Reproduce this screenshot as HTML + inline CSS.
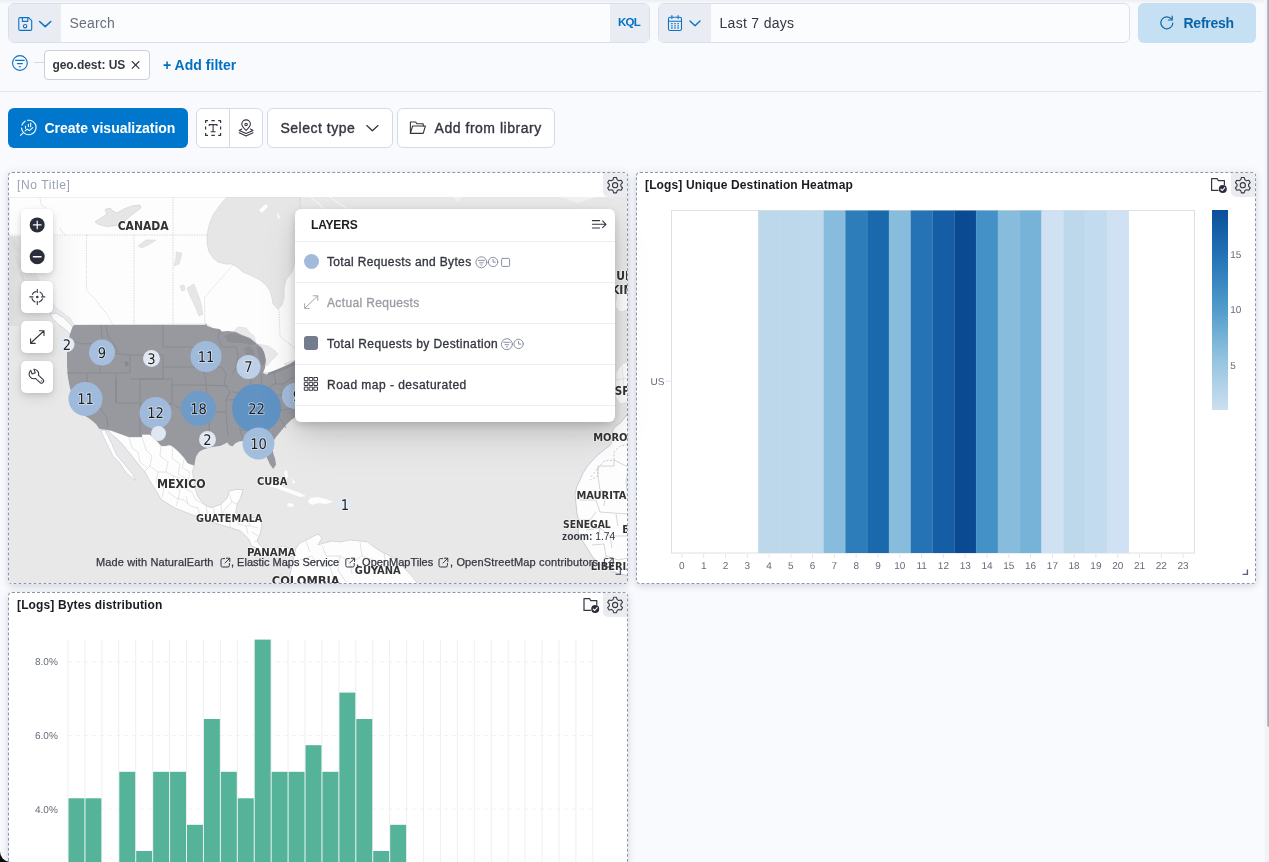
<!DOCTYPE html>
<html lang="en">
<head>
<meta charset="utf-8">
<title>Dashboard</title>
<style>
*{box-sizing:border-box;margin:0;padding:0}
html,body{width:1269px;height:862px;overflow:hidden}
body{background:#f8fafd;font-family:"Liberation Sans",Arial,sans-serif;color:#343741;position:relative}
.abs{position:absolute}
body>div{will-change:transform}
.topshade{left:0;top:0;width:1269px;height:4px;background:linear-gradient(#eceef2,#f8fafd)}
.rightedge{left:1263.5px;top:0;width:6px;height:862px;background:linear-gradient(90deg,#f8fafd,#f3f4f7 1px,#f2f3f5)}
.rightline{left:1266.8px;top:-4px;width:4px;height:731px;border-radius:2px;background:linear-gradient(90deg,#d0d3dc,#a7abb9 1px,#a2a6b5)}
/* query bar */
.field{border:1px solid #d9e0ec;border-radius:6px;background:#fbfcfd;overflow:hidden}
.prepend{background:#e9edf3;height:100%}
.placeholder{color:#69707d;font-size:14px;letter-spacing:.18px}
.kql{color:#0071c2;font-weight:700;font-size:11.5px;letter-spacing:-.8px}
.btn-refresh{background:#c6e0f3;border-radius:6px;color:#0a64a8;font-weight:700;font-size:14px;letter-spacing:-.26px}
.sep{left:0;top:91px;width:1262px;height:1px;background:#dfe5ef}
.badge{border:1px solid #c9cfdb;border-radius:4px;background:#fff;font-size:12px;font-weight:700;color:#343741;letter-spacing:-.04px}
.addfilter{color:#0071c2;font-weight:700;font-size:14px;letter-spacing:.03px}
/* toolbar */
.btn-primary{background:#0077cc;border-radius:6px;color:#fff;font-weight:700;font-size:14px;letter-spacing:-.03px}
.btn-plain{background:#fff;border:1px solid #d3dae6;border-radius:6px;color:#343741;font-size:14px;letter-spacing:.52px;-webkit-text-stroke:.36px}
/* panels */
.panel{background:#fff;border:1px dashed #8d97ab;border-radius:4px;box-shadow:0 1px 9px rgba(50,60,90,.13),0 3px 6px rgba(50,60,90,.07)}
.ptitle{font-size:12px;font-weight:700;color:#1a1c21;white-space:nowrap;letter-spacing:.14px}
.gearbg{background:#ebecf0;border-radius:0 3px 0 5px}
svg{position:absolute;left:0;top:0;overflow:visible}
svg{font-family:"Liberation Sans",Arial,sans-serif;text-rendering:geometricPrecision}
.ctl{background:#fff;border-radius:5px;box-shadow:0 2px 6px rgba(0,0,0,.13),0 6px 14px rgba(0,0,0,.07),0 0 2px rgba(0,0,0,.06)}
.layers{background:#fff;border-radius:6px;box-shadow:0 3px 9px rgba(0,0,0,.15),0 9px 24px rgba(0,0,0,.11),0 20px 40px rgba(0,0,0,.08)}
.lrow{left:0;width:320px;height:1px;background:#eceff5}
.ltxt{font-size:12px;color:#343741;white-space:nowrap;letter-spacing:.35px;-webkit-text-stroke:.32px}
.maplabel{font-family:"DejaVu Sans Condensed","DejaVu Sans","Liberation Sans",sans-serif;font-weight:700;color:#333;white-space:nowrap;text-shadow:0 0 2px #fff,0 0 2px #fff,0 0 1px #fff}
.attr{font-size:11px;color:#343741;white-space:nowrap;-webkit-text-stroke:.25px}
</style>
</head>
<body>
<div class="abs topshade"></div>

<!-- ======= query bar ======= -->
<div class="abs field" style="left:8px;top:3px;width:642px;height:40px">
  <div class="abs prepend" style="left:0;top:0;width:52px"></div>
  <div class="abs placeholder" style="left:60.5px;top:11px">Search</div>
  <div class="abs prepend" style="left:601px;top:0;width:41px"></div>
  <div class="abs kql" style="left:609px;top:12px">KQL</div>
</div>
<div class="abs field" style="left:658px;top:3px;width:472px;height:40px">
  <div class="abs prepend" style="left:0;top:0;width:52px"></div>
  <div class="abs" style="left:60.5px;top:11px;font-size:14px;letter-spacing:.3px;color:#343741">Last 7 days</div>
</div>
<div class="abs btn-refresh" style="left:1138px;top:3px;width:118px;height:40px">
  <div class="abs" style="left:45.5px;top:12px">Refresh</div>
</div>

<!-- filter row -->
<div class="abs" style="left:34px;top:62px;width:11px;height:1px;background:#d3dae6"></div>
<div class="abs badge" style="left:44px;top:50px;width:106px;height:30px">
  <div class="abs" style="left:7.4px;top:7px">geo.dest: US</div>
</div>
<div class="abs addfilter" style="left:163px;top:57px">+ Add filter</div>
<div class="abs sep"></div>

<!-- ======= toolbar ======= -->
<div class="abs btn-primary" style="left:8px;top:108px;width:180px;height:40px">
  <div class="abs" style="left:36.5px;top:11.5px">Create visualization</div>
</div>
<div class="abs btn-plain" style="left:196px;top:108px;width:67px;height:40px">
  <div class="abs" style="left:32px;top:0;width:1px;height:38px;background:#d3dae6"></div>
</div>
<div class="abs btn-plain" style="left:267px;top:108px;width:126px;height:40px">
  <div class="abs" style="left:12.4px;top:11px">Select type</div>
</div>
<div class="abs btn-plain" style="left:397px;top:108px;width:158px;height:40px">
  <div class="abs" style="left:36.6px;top:11px">Add from library</div>
</div>

<!-- ======= panels ======= -->
<div class="abs panel" style="left:8px;top:172px;width:620px;height:412px"></div>
<div class="abs panel" style="left:636px;top:172px;width:620px;height:412px"></div>
<div class="abs panel" style="left:8px;top:592px;width:620px;height:300px"></div>

<div class="abs ptitle" style="left:16.5px;top:178px;font-weight:400;color:#98a2b3;letter-spacing:.62px">[No Title]</div>
<div class="abs ptitle" style="left:645px;top:178px">[Logs] Unique Destination Heatmap</div>
<div class="abs ptitle" style="left:17px;top:598px">[Logs] Bytes distribution</div>

<div class="abs gearbg" style="left:603px;top:173px;width:24px;height:24px"></div>
<div class="abs gearbg" style="left:1231px;top:173px;width:24px;height:24px"></div>
<div class="abs gearbg" style="left:603px;top:593px;width:24px;height:24px"></div>

<!-- ======= map ======= -->
<div class="abs" id="map" style="left:9px;top:197px;width:618px;height:386px;overflow:hidden;background:#e8e8e8">
<svg width="619" height="386" viewBox="9 197 619 386" style="position:absolute;left:0;top:0">
  <defs>
    <linearGradient id="lfade" x1="0" x2="1" y1="0" y2="0"><stop offset="0" stop-color="#dcdcdc"/><stop offset=".25" stop-color="#e4e4e4" stop-opacity=".8"/><stop offset="1" stop-color="#f0f0f0" stop-opacity="0"/></linearGradient>
    <filter id="soft" x="-5%" y="-5%" width="110%" height="110%"><feGaussianBlur stdDeviation="0.6"/></filter>
  </defs>
  <rect x="9" y="197" width="619" height="386" fill="#e8e8e8"/>
  <!-- North America land -->
  <path fill="#fdfdfd" stroke="#cfd3da" stroke-width="0.6" d="M9,197 L300,197 L300,215 L300,365 L295,362 L285,368 L272,372 L263,373 L230,340 L206,324 L74,325
   L70,318 L62,312 L56,308 L50,298 L44,290 L40,282 L34,270 L28,255 L22,243 L9,236 Z"/>
  <!-- Mexico + Central America -->
  <path fill="#fdfdfd" stroke="#c3cad6" stroke-width="0.7" d="M99,428.5 L111,430.5 L129,437 L142,437 L142,434.5 L150,434.5 L156,440 L161,445.7 L165,446 L169.5,444.9 L172.8,446.5 L178,451 L184.4,458 L187.7,463 L194.3,465.5 L192.6,471.3 L193.5,480 L195,488 L197.6,496.2 L204.2,504.4 L210.8,507.7 L220.8,504.4 L227.4,497.8 L229,491.2 L235.7,489.5 L243.1,489.5 L240.6,497.8 L237.3,504.4 L235.7,512.7 L240,516 L248,517 L256,518 L262.1,522.6 L260.5,532.6 L257.2,540.8 L259,544 L262.1,547.5 L268,549 L274,549 L282,546 L288,548 L292,553 L296,548 L296,558 L290,556 L284,552 L276,554 L268,556 L258.8,549 L251.4,545.8 L248.9,539.2 L240.6,531 L230,527.5 L219,524.3 L205,519 L191,514.4 L174.4,507.7 L161.2,499.5 L156.2,491.2 L150,481 L144.6,471.3 L138,464 L133,457.3 L127,450 L121.5,443.2 L116,438 L111.5,434 L107.4,430 Z"/>
  <!-- Baja California -->
  <path fill="#fdfdfd" stroke="#c3cad6" stroke-width="0.6" d="M100.8,430.8 L105,430 L111.5,443.2 L116.5,454.8 L124.8,464.7 L133,474.6 L135.5,480.4 L126.4,473 L119.8,463 L113.2,456.4 L106.6,443.2 Z"/>
  <!-- Mexican state / central american borders (faint) -->
  <g fill="none" stroke="#d2d5db" stroke-width="0.6">
    <path d="M129,437 L132,448 L138,452 L140,462 L147,468 M142,437 L146,450 L152,456 L150,466 L158,472 L156,482 L164,488 L162,498 M161,446 L160,456 L168,462 L166,472 L174,476 L172,486 L180,490 L178,500 M172.800,447 L172,458 L180,464 L178,474 L186,478 L184,488 L192,492 M184.400,458 L182,468 L190,472 L188,482 L195,486 M158,472 L166,472 M164,488 L172,486 M150,466 L144,472 M174,476 L180,478 M168,492 L176,498 L184,500 L190,506 L198,508 M178,500 L176,506 M186,496 L188,504 M192,492 L196,500 L204,504 M198,508 L200,516 M206,506 L208,518 M214,506 L214,520 M220.800,504 L222,514 L230,518 L230,527 M229,493 L232,502 L237,504 M232,502 L226,508 L222,514 M240,516 L238,524 L246,526 L248,534 M248,517 L250,526 L258,528 M246,526 L250,526 M252,532 L258,536 M254,542 L258,540"/>
  </g>
  <!-- South America -->
  <path fill="#fdfdfd" stroke="#c5cbd6" stroke-width="0.7" d="M288,584 L292,566 L296,548 L300,543 L306,540 L312,537 L318,534 L322,538 L318,545 L324,543 L332,541 L340,542 L350,540 L360,541 L368,542 L374,547 L382,552 L390,556 L398,562 L405,569 L412,576 L418,584 Z"/>
  <g fill="none" stroke="#cdd1d9" stroke-width="0.6">
    <path d="M300,560 L312,556 L318,566 L330,566 L334,580 M322,545 L326,556 L340,556 L350,562 L352,574 M360,542 L362,556 L374,560 L378,574 M384,553 L386,566 L396,570 M306,541 L310,552 M340,556 L338,570 L346,582 M362,556 L352,562"/>
  </g>
  <!-- Caribbean islands -->
  <path fill="#fdfdfd" d="M268,483 L276,483 L284,487 L292,490 L300,493 L306,496 L300,497 L292,494 L284,491 L276,488 L268,486 Z"/>
  <path fill="#fdfdfd" d="M310,498 L318,497 L326,499 L333,502 L326,504 L318,503 L312,505 L308,502 Z"/>
  <path fill="#fdfdfd" d="M288,503 L294,504 L293,507 L287,506 Z"/>
  <path fill="#fdfdfd" d="M284,472 L287,470 L288,476 L286,480 Z M292,478 L295,482 L293,484 Z"/>
  <!-- Africa -->
  <path fill="#fdfdfd" stroke="#b9c4d4" stroke-width="0.8" d="M628,412 L626.2,416 L620.5,422.700 L616,426 L613,429.300 L612,436 L611,444.400 L604,450 L597.800,454.800 L592,461 L587.400,466.200 L583,473 L580.300,479.400 L577,486 L575,494 L576,504 L577,514 L580,524 L578,532 L582,540 L587,548 L592,556 L598,563 L606,568 L614,572 L622,574.500 L628,575.500 Z"/>
  <g fill="none" stroke="#b4b7bd" stroke-width="0.7" stroke-dasharray="2.2 1.6">
    <path d="M628,444 L620,446 L614,452 L614,460 L604,461 L598,468 L590,478 M598,468 L598,476 L590,480"/>
  </g>
  <g fill="none" stroke="#b9bcc2" stroke-width="0.6">
    <path d="M614,460 L614,466 L598,466 L598,476 M614,460 L628,467 M626,470 L628,470 L626,482 L628,500 M598,476 L600,490 L606,492 L628,494 M580,500 L596,500 L600,512 L628,514 M578,520 L590,520 L596,512 M586,530 L600,528 L610,536 L628,536 M592,545 L604,544 L606,556 L618,560 L628,558 M600,528 L598,540 M610,536 L612,548 M606,556 L600,566 M606,492 L604,506 M616,514 L618,526"/>
  </g>
  <!-- Europe bits on right strip -->
  <path fill="#fdfdfd" stroke="#d5d8df" stroke-width="0.5" d="M618,290 L628,286 L628,310 L620,312 L615,306 Z"/>
  <path fill="#fdfdfd" stroke="#d5d8df" stroke-width="0.5" d="M616,372 L622,364 L628,362 L628,402 L620,404 L615,396 Z"/>
  <g fill="none" stroke="#d5d8df" stroke-width="0.5"><path d="M616,380 L628,378 M622,364 L624,392 L616,394"/></g>
  <!-- top strip slivers -->
  <path fill="none" stroke="#f4f4f4" stroke-width="1.2" d="M311,197 L318,203 L324,209 M330,197 L340,204 L348,209"/>
  <path fill="#f1f1f1" d="M453,197 L462,197 L458,202 Z M560,197 L596,197 L578,203 Z"/>
  <!-- Hudson Bay -->
  <path fill="#e6e6e6" stroke="#d0d3da" stroke-width="0.6" d="M227,197 L220,205 L213,215 L209,225 L207,235 L207,244 L209,252 L213,258 L218,262 L226,264 L232,264 L238,268 L243,272 L252,276 L260,280 L266,285 L270,291 L272,298 L273,304 L278,309 L282,305 L284,298 L284,288 L286,280 L292,272 L295,262 L297,250 L296,238 L294,228 L296,218 L300,210 L300,197 Z"/>
  <path fill="#fdfdfd" d="M259,210 L266,204 L268,206.500 L262,213 Z M277,212 L280,217 L278,219 Z"/>
  <!-- Canadian lakes -->
  <path fill="#e6e6e6" stroke="#c5cfdc" stroke-width="0.6" d="M95,221.700 L101,218 L107,214 L105,209.500 L110,208 L113,211 L117,213 L124,209 L131.600,206 L140,205 L141,208 L135,212.500 L129,217 L125,221 L122,224 L114,226 L107,226.500 L97.500,224 Z"/>
  <path fill="#e6e6e6" stroke="#cfd4dc" stroke-width="0.5" d="M138,246 L146,240 L156,240 L150,244 L142,248 Z"/>
  <path fill="#e6e6e6" stroke="#cfd4dc" stroke-width="0.5" d="M176,252 L182,253 L179,264 L174,266 L176,258 Z"/>
  <path fill="#e6e6e6" stroke="#cfd4dc" stroke-width="0.5" d="M180,286 L184,285 L185,290 L182,291 Z M187,288 L194,284 L200,300 L203,314 L199,316 L194,304 L190,296 Z"/>
  <!-- Canada province borders -->
  <g fill="none" stroke="#c4c7ce" stroke-width="0.6" stroke-dasharray="1.5 1">
    <path d="M9,235 L207,235 M86.500,235 L86.500,290 L94,298 L102,308 L108,316 L113,325 M134,235 L134,325 M173,197 L173,325 M234,264 L218,282 L204.700,297 L204.700,323 M279,309 L280,336 L288,343 L296,349 M40,197 L41,205 L45,207 L48,212 M60,228 L62,232 L66,235"/>
  </g>
  <!-- Alaska panhandle / BC coast texture -->
  <path fill="#dedee0" filter="url(#soft)" d="M9,236 L16,238 L22,246 L26,258 L30,272 L40,284 L46,292 L36,292 L28,282 L22,270 L16,258 L9,252 Z"/>
  <g fill="#a4a6ae" filter="url(#soft)">
    <path d="M10,239 L15,240 L18,246 L20,252 L17,253 L13,247 Z M14,254 L18,256 L21,264 L22,270 L19,269 L16,262 Z M11,262 L14,266 L15,272 L12,270 Z M19,272 L23,274 L25,281 L22,280 Z M26,282 L32,282 L38,285 L44,288 L42,292 L34,291 L28,288 Z"/>
  </g>
  <g fill="#c9cace">
    <path d="M16,243 L19,247 L17,249 Z M20,258 L23,263 L21,265 Z M30,285 L36,287 L34,290 Z M12,256 L14,259 L12,261 Z"/>
  </g>
  <rect x="9" y="236" width="75" height="90" fill="url(#lfade)"/>
  <!-- Vancouver island -->
  <path fill="#fbfbfc" stroke="#b9c6d8" stroke-width="0.6" d="M50,314 L56,313 L64,318 L72,326 L74,332 L70,334 L66,330 L58,324 L52,318 Z"/>
  <!-- great lakes (north / light) -->
  <path fill="#e9e9ea" stroke="#cfd4dc" stroke-width="0.5" d="M232,333 L238,327 L246,328 L250,333 L254,336 L256,343 L246,338 L238,334 Z"/>
  <path fill="#e9e9ea" stroke="#cfd4dc" stroke-width="0.5" d="M258,344 L268,346 L274,350 L278,354 L274,358 L270,362 L267,366 L265,358 L263,350 Z"/>
  <path fill="#e9e9ea" stroke="#cfd4dc" stroke-width="0.5" d="M284,364 L292,361 L296,360 L296,364 L288,367 Z"/>
  <!-- USA -->
  <path fill="#98999f" d="M74,325 L205.5,325 L205.8,322.5 L207,326 L213,328 L219,329 L222,331.5 L228,331 L236,332 L242,335 L250,338 L256,343 L261,347 L264,352 L266,360 L265,368 L263,373 L266,374.5 L274,372 L282,368 L290,364 L296,360 L300,360 L300,414 L294,418 L291,420 L286,425 L281,431 L276,437 L273,442 L272,448 L273.7,454.8 L275.2,459 L276,464.7 L273.2,468.9 L270,464.500 L267,458 L265,452 L262,446 L256,442 L250,441 L244,440.7 L239,441.5 L235,443.5 L232.4,446.5 L229,445 L227.4,442.4 L220.8,445.7 L210.8,447.3 L202.6,449.8 L199,452 L196,456.4 L194.3,465.5 L190,464 L187.7,463 L184.4,458 L178,451 L172.8,446.5 L169.5,444.9 L165,446 L161,445.7 L156,440 L150,434.5 L142,434.5 L142,437 L129,437 L111,430.5 L99,428.5 L96,424 L90,419 L82,414 L78,408 L73,398 L70,388 L68,378 L67,366 L67,352 L68,342 L70,334 L72,328 Z"/>
  <!-- lakes inside US polygon (darker) -->
  <path fill="#8e8f96" d="M224,336 L232,333 L240,335 L250,339 L256,344 L250,345 L242,343 L236,343 L228,342 Z"/>
  <path fill="#8e8f96" d="M244,348 L250,346 L254,350 L255,358 L253,366 L249,366 L247,358 Z"/>
  <path fill="#8e8f96" d="M256,346 L262,348 L265,356 L265,364 L262,366 L259,358 Z"/>
  <path fill="#8e8f96" d="M268,373 L278,369 L290,364 L296,361 L296,364 L286,369 L276,373 L268,375 Z"/>
  <!-- state borders -->
  <g fill="none" stroke="#84858c" stroke-width="0.7">
    <path d="M70,341 L84,344 L100,343 M101,325 L102,338 L106,346 L104,353 L100,355 L100,373 M100,373 L67,373 M87,373 L87,390 L107,418 L108,428 M100,373 L116,373 L116,403 M116,373 L130,373 L130,355 L106,352 M130,355 L163,355 L163,379 L130,379 M116,403 L140,403 L140,436 M116,379 L116,403 M140,379 L140,403 M106,325 L108,336 L114,344 L118,352 M163,325 L163,347 M163,347 L196,347 M163,367 L200,367 M140,379 L172,379 L172,385 L206,385 M172,385 L172,404 L140,404 M172,404 L180,408 L196,412 L206,412 M196,347 L198,356 L202,367 L206,380 L206,385 L208,412 L210,436 L208,445 M206,412 L226,412 L228,436 M196,347 L218,347 L220,356 M200,367 L222,367 L226,374 L224,384 L230,392 L226,400 L226,412 M206,385 L228,386 M220,329 L218,338 L222,347 M222,347 L236,347 L238,356 L236,368 L232,374 M236,368 L250,368 M250,366 L251,390 L248,398 M261,374 L262,394 L258,400 M232,392 L262,394 M226,400 L270,398 L290,392 M240,400 L240,430 L244,442 M256,400 L258,430 L262,444 M258,430 L240,430 M258,434 L274,436 M270,398 L276,412 L286,428 M276,412 L292,408 M262,394 L274,384 L284,384 L292,378 L300,378 M274,372 L276,384"/>
  </g>
  <!-- rivers/lakes small -->
  <path fill="#878990" d="M124,362 L127,361 L129,365 L126,367 Z"/>
  <!-- cluster circles -->
  <g>
    <circle cx="67" cy="344.5" r="7.5" fill="#e3eaf4"/>
    <circle cx="102" cy="352.5" r="13" fill="#a6bfde"/>
    <circle cx="151.5" cy="358.5" r="8.5" fill="#dfe7f2"/>
    <circle cx="206" cy="356.5" r="15.5" fill="#9fbadb"/>
    <circle cx="248.5" cy="367" r="12" fill="#bdd0e7"/>
    <circle cx="85.5" cy="399" r="17" fill="#9fbadb"/>
    <circle cx="155.5" cy="413" r="16" fill="#9fbadb"/>
    <circle cx="158.5" cy="433.5" r="7.5" fill="#dfe7f2"/>
    <circle cx="198.5" cy="408.5" r="17.5" fill="#6f9bc9"/>
    <circle cx="256.5" cy="408.5" r="24.5" fill="#6092c4"/>
    <circle cx="295" cy="396" r="13" fill="#a6bfde"/>
    <circle cx="207.5" cy="439.5" r="8.5" fill="#dfe7f2"/>
    <circle cx="258.5" cy="443.5" r="16" fill="#a3bddc"/>
    <circle cx="345" cy="504.5" r="7" fill="#e3eaf4"/>
  </g>
  <g font-family="'DejaVu Sans Condensed','DejaVu Sans',sans-serif" font-size="14.6" fill="#1f1f1f" text-anchor="middle" stroke="#fff" stroke-width="1.6" stroke-opacity=".55" paint-order="stroke" style="paint-order:stroke">
    <text x="67" y="349.5">2</text>
    <text x="102" y="357.5">9</text>
    <text x="151.5" y="363.5">3</text>
    <text x="206" y="361.5">11</text>
    <text x="248.5" y="372">7</text>
    <text x="85.5" y="404">11</text>
    <text x="155.5" y="418">12</text>
    <text x="198.5" y="413.5">18</text>
    <text x="256.5" y="413.5">22</text>
    <text x="297" y="401">9</text>
    <text x="207.5" y="444.5">2</text>
    <text x="258.5" y="448.5">10</text>
    <text x="345" y="509.5">1</text>
  </g>
</svg>
<!-- labels -->
<div class="abs maplabel" style="left:108.7px;top:22px;font-size:12px">CANADA</div>
<div class="abs maplabel" style="left:148px;top:280px;font-size:12.3px">MEXICO</div>
<div class="abs maplabel" style="left:248px;top:278.4px;font-size:11px">CUBA</div>
<div class="abs maplabel" style="left:187px;top:315px;font-size:10.8px">GUATEMALA</div>
<div class="abs maplabel" style="left:238px;top:349.4px;font-size:11.3px">PANAMA</div>
<div class="abs maplabel" style="left:262.800px;top:375.6px;font-size:12.7px">COLOMBIA</div>
<div class="abs maplabel" style="left:345.8px;top:366.8px;font-size:11px">GUYANA</div>
<div class="abs maplabel" style="left:584.2px;top:233.700px;font-size:11px">MOROCCO</div>
<div class="abs maplabel" style="left:567.4px;top:292px;font-size:11px">MAURITANIA</div>
<div class="abs maplabel" style="left:554px;top:321.3px;font-size:10.3px">SENEGAL</div>
<div class="abs maplabel" style="left:613.2px;top:326.4px;font-size:11px">BURKINA</div>
<div class="abs maplabel" style="left:581.7px;top:363.2px;font-size:11px">LIBERIA</div>
<div class="abs maplabel" style="left:607.3px;top:71.800px;font-size:12px">UNITED</div>
<div class="abs maplabel" style="left:602px;top:86px;font-size:12px">KINGDOM</div>
<div class="abs maplabel" style="left:605.8px;top:187px;font-size:11.5px">SPAIN</div>

</div>

<!-- map controls -->
<div class="abs ctl" style="left:21px;top:209px;width:32px;height:64px"></div>
<div class="abs ctl" style="left:21px;top:281px;width:32px;height:32px"></div>
<div class="abs ctl" style="left:21px;top:321px;width:32px;height:32px"></div>
<div class="abs ctl" style="left:21px;top:361px;width:32px;height:32px"></div>

<!-- layers panel -->
<div class="abs layers" style="left:295px;top:209px;width:320px;height:213px">
  <div class="abs" style="left:16px;top:9px;font-size:12px;font-weight:700;color:#1a1c21;letter-spacing:-.18px">LAYERS</div>
  <div class="abs lrow" style="top:32px"></div>
  <div class="abs lrow" style="top:73px"></div>
  <div class="abs lrow" style="top:114px"></div>
  <div class="abs lrow" style="top:155px"></div>
  <div class="abs lrow" style="top:196px"></div>
  <div class="abs" style="left:9px;top:45px;width:15px;height:15px;border-radius:50%;background:#a2bbdb"></div>
  <div class="abs ltxt" style="left:32px;top:45.5px">Total Requests and Bytes</div>
  <div class="abs ltxt" style="left:32px;top:86.5px;color:#9a9da4">Actual Requests</div>
  <div class="abs" style="left:9px;top:127px;width:14px;height:14px;border-radius:3px;background:#757b8f"></div>
  <div class="abs ltxt" style="left:32px;top:127.5px;letter-spacing:.43px">Total Requests by Destination</div>
  <div class="abs ltxt" style="left:32px;top:168.5px;letter-spacing:.47px">Road map - desaturated</div>
</div>

<!-- attribution -->
<div class="abs attr" style="left:96.4px;top:556px;letter-spacing:.12px">Made with NaturalEarth</div>
<div class="abs attr" style="left:231.2px;top:556px">, Elastic Maps Service</div>
<div class="abs attr" style="left:355.6px;top:556px">, OpenMapTiles</div>
<div class="abs attr" style="left:450px;top:556px;letter-spacing:.14px">, OpenStreetMap contributors</div>
<div class="abs" style="left:561.5px;top:530.5px;font-size:10.3px;color:#343741;white-space:nowrap"><b>zoom:</b> 1.74</div>

<!-- heatmap + bars svg (page coords) -->
<svg width="1269" height="862" viewBox="0 0 1269 862">
  <g id="heat">
    <rect x="671.5" y="210.5" width="523" height="342.5" fill="#fff" stroke="#e0e0e0" stroke-width="1"/>
    <rect x="758.17" y="210.5" width="22.09" height="342.5" fill="#bdd7eb"/>
<rect x="779.96" y="210.5" width="22.09" height="342.5" fill="#bdd7eb"/>
<rect x="801.75" y="210.5" width="22.09" height="342.5" fill="#bed8ec"/>
<rect x="823.54" y="210.5" width="22.09" height="342.5" fill="#87bcdc"/>
<rect x="845.33" y="210.5" width="22.09" height="342.5" fill="#2d7dbb"/>
<rect x="867.12" y="210.5" width="22.09" height="342.5" fill="#1b69ad"/>
<rect x="888.92" y="210.5" width="22.09" height="342.5" fill="#87bcdc"/>
<rect x="910.71" y="210.5" width="22.09" height="342.5" fill="#2573b5"/>
<rect x="932.50" y="210.5" width="22.09" height="342.5" fill="#155da4"/>
<rect x="954.29" y="210.5" width="22.09" height="342.5" fill="#0a4a92"/>
<rect x="976.08" y="210.5" width="22.09" height="342.5" fill="#4391c6"/>
<rect x="997.88" y="210.5" width="22.09" height="342.5" fill="#87bcdc"/>
<rect x="1019.67" y="210.5" width="22.09" height="342.5" fill="#77b3d8"/>
<rect x="1041.46" y="210.5" width="22.09" height="342.5" fill="#cfe1f2"/>
<rect x="1063.25" y="210.5" width="22.09" height="342.5" fill="#bdd7eb"/>
<rect x="1085.04" y="210.5" width="22.09" height="342.5" fill="#c3dbee"/>
<rect x="1106.83" y="210.5" width="22.09" height="342.5" fill="#cfe1f2"/>
<line x1="779.96" y1="210.5" x2="779.96" y2="553" stroke="#fff" stroke-opacity=".12" stroke-width="0.6"/>
<line x1="801.75" y1="210.5" x2="801.75" y2="553" stroke="#fff" stroke-opacity=".12" stroke-width="0.6"/>
<line x1="823.54" y1="210.5" x2="823.54" y2="553" stroke="#fff" stroke-opacity=".12" stroke-width="0.6"/>
<line x1="845.33" y1="210.5" x2="845.33" y2="553" stroke="#fff" stroke-opacity=".12" stroke-width="0.6"/>
<line x1="867.12" y1="210.5" x2="867.12" y2="553" stroke="#fff" stroke-opacity=".12" stroke-width="0.6"/>
<line x1="888.92" y1="210.5" x2="888.92" y2="553" stroke="#fff" stroke-opacity=".12" stroke-width="0.6"/>
<line x1="910.71" y1="210.5" x2="910.71" y2="553" stroke="#fff" stroke-opacity=".12" stroke-width="0.6"/>
<line x1="932.50" y1="210.5" x2="932.50" y2="553" stroke="#fff" stroke-opacity=".12" stroke-width="0.6"/>
<line x1="954.29" y1="210.5" x2="954.29" y2="553" stroke="#fff" stroke-opacity=".12" stroke-width="0.6"/>
<line x1="976.08" y1="210.5" x2="976.08" y2="553" stroke="#fff" stroke-opacity=".12" stroke-width="0.6"/>
<line x1="997.88" y1="210.5" x2="997.88" y2="553" stroke="#fff" stroke-opacity=".12" stroke-width="0.6"/>
<line x1="1019.67" y1="210.5" x2="1019.67" y2="553" stroke="#fff" stroke-opacity=".12" stroke-width="0.6"/>
<line x1="1041.46" y1="210.5" x2="1041.46" y2="553" stroke="#fff" stroke-opacity=".12" stroke-width="0.6"/>
<line x1="1063.25" y1="210.5" x2="1063.25" y2="553" stroke="#fff" stroke-opacity=".12" stroke-width="0.6"/>
<line x1="1085.04" y1="210.5" x2="1085.04" y2="553" stroke="#fff" stroke-opacity=".12" stroke-width="0.6"/>
<line x1="1106.83" y1="210.5" x2="1106.83" y2="553" stroke="#fff" stroke-opacity=".12" stroke-width="0.6"/>
    <g font-size="10" fill="#646b7a"><text transform="translate(681.9 568.6)" text-anchor="middle">0</text>
<line x1="681.9" y1="553.500" x2="681.9" y2="558" stroke="#e3e6ed" stroke-width="1"/>
<text transform="translate(703.7 568.6)" text-anchor="middle">1</text>
<line x1="703.7" y1="553.500" x2="703.7" y2="558" stroke="#e3e6ed" stroke-width="1"/>
<text transform="translate(725.5 568.6)" text-anchor="middle">2</text>
<line x1="725.5" y1="553.500" x2="725.5" y2="558" stroke="#e3e6ed" stroke-width="1"/>
<text transform="translate(747.3 568.6)" text-anchor="middle">3</text>
<line x1="747.3" y1="553.500" x2="747.3" y2="558" stroke="#e3e6ed" stroke-width="1"/>
<text transform="translate(769.1 568.6)" text-anchor="middle">4</text>
<line x1="769.1" y1="553.500" x2="769.1" y2="558" stroke="#e3e6ed" stroke-width="1"/>
<text transform="translate(790.9 568.6)" text-anchor="middle">5</text>
<line x1="790.9" y1="553.500" x2="790.9" y2="558" stroke="#e3e6ed" stroke-width="1"/>
<text transform="translate(812.6 568.6)" text-anchor="middle">6</text>
<line x1="812.6" y1="553.500" x2="812.6" y2="558" stroke="#e3e6ed" stroke-width="1"/>
<text transform="translate(834.4 568.6)" text-anchor="middle">7</text>
<line x1="834.4" y1="553.500" x2="834.4" y2="558" stroke="#e3e6ed" stroke-width="1"/>
<text transform="translate(856.2 568.6)" text-anchor="middle">8</text>
<line x1="856.2" y1="553.500" x2="856.2" y2="558" stroke="#e3e6ed" stroke-width="1"/>
<text transform="translate(878.0 568.6)" text-anchor="middle">9</text>
<line x1="878.0" y1="553.500" x2="878.0" y2="558" stroke="#e3e6ed" stroke-width="1"/>
<text transform="translate(899.8 568.6)" text-anchor="middle">10</text>
<line x1="899.8" y1="553.500" x2="899.8" y2="558" stroke="#e3e6ed" stroke-width="1"/>
<text transform="translate(921.6 568.6)" text-anchor="middle">11</text>
<line x1="921.6" y1="553.500" x2="921.6" y2="558" stroke="#e3e6ed" stroke-width="1"/>
<text transform="translate(943.4 568.6)" text-anchor="middle">12</text>
<line x1="943.4" y1="553.500" x2="943.4" y2="558" stroke="#e3e6ed" stroke-width="1"/>
<text transform="translate(965.2 568.6)" text-anchor="middle">13</text>
<line x1="965.2" y1="553.500" x2="965.2" y2="558" stroke="#e3e6ed" stroke-width="1"/>
<text transform="translate(987.0 568.6)" text-anchor="middle">14</text>
<line x1="987.0" y1="553.500" x2="987.0" y2="558" stroke="#e3e6ed" stroke-width="1"/>
<text transform="translate(1008.8 568.6)" text-anchor="middle">15</text>
<line x1="1008.8" y1="553.500" x2="1008.8" y2="558" stroke="#e3e6ed" stroke-width="1"/>
<text transform="translate(1030.6 568.6)" text-anchor="middle">16</text>
<line x1="1030.6" y1="553.500" x2="1030.6" y2="558" stroke="#e3e6ed" stroke-width="1"/>
<text transform="translate(1052.4 568.6)" text-anchor="middle">17</text>
<line x1="1052.4" y1="553.500" x2="1052.4" y2="558" stroke="#e3e6ed" stroke-width="1"/>
<text transform="translate(1074.1 568.6)" text-anchor="middle">18</text>
<line x1="1074.1" y1="553.500" x2="1074.1" y2="558" stroke="#e3e6ed" stroke-width="1"/>
<text transform="translate(1095.9 568.6)" text-anchor="middle">19</text>
<line x1="1095.9" y1="553.500" x2="1095.9" y2="558" stroke="#e3e6ed" stroke-width="1"/>
<text transform="translate(1117.7 568.6)" text-anchor="middle">20</text>
<line x1="1117.7" y1="553.500" x2="1117.7" y2="558" stroke="#e3e6ed" stroke-width="1"/>
<text transform="translate(1139.5 568.6)" text-anchor="middle">21</text>
<line x1="1139.5" y1="553.500" x2="1139.5" y2="558" stroke="#e3e6ed" stroke-width="1"/>
<text transform="translate(1161.3 568.6)" text-anchor="middle">22</text>
<line x1="1161.3" y1="553.500" x2="1161.3" y2="558" stroke="#e3e6ed" stroke-width="1"/>
<text transform="translate(1183.1 568.6)" text-anchor="middle">23</text>
<line x1="1183.1" y1="553.500" x2="1183.1" y2="558" stroke="#e3e6ed" stroke-width="1"/></g>
    <text transform="translate(657.5 384.7)" font-size="10" fill="#646b7a" text-anchor="middle">US</text>
    <line x1="665" y1="381.2" x2="671" y2="381.2" stroke="#e3e6ed"/>
    <defs><linearGradient id="lg" x1="0" y1="0" x2="0" y2="1">
      <stop offset="0" stop-color="#0a4f9c"/><stop offset=".25" stop-color="#2676b8"/><stop offset=".5" stop-color="#529dcc"/><stop offset=".75" stop-color="#94c4df"/><stop offset="1" stop-color="#cddff1"/>
    </linearGradient></defs>
    <rect x="1212" y="210" width="16" height="200" fill="url(#lg)"/>
    <g font-size="10" fill="#646b7a"><text transform="translate(1230.300 257.9)">15</text><text transform="translate(1230.300 313.3)">10</text><text transform="translate(1230.300 368.7)">5</text></g>
  </g>
  <g id="bars">
    <line x1="68.00" y1="639.5" x2="68.00" y2="870" stroke="#efeff2" stroke-width="1"/>
<line x1="84.93" y1="639.5" x2="84.93" y2="870" stroke="#efeff2" stroke-width="1"/>
<line x1="101.86" y1="639.5" x2="101.86" y2="870" stroke="#efeff2" stroke-width="1"/>
<line x1="118.79" y1="639.5" x2="118.79" y2="870" stroke="#efeff2" stroke-width="1"/>
<line x1="135.72" y1="639.5" x2="135.72" y2="870" stroke="#efeff2" stroke-width="1"/>
<line x1="152.65" y1="639.5" x2="152.65" y2="870" stroke="#efeff2" stroke-width="1"/>
<line x1="169.58" y1="639.5" x2="169.58" y2="870" stroke="#efeff2" stroke-width="1"/>
<line x1="186.51" y1="639.5" x2="186.51" y2="870" stroke="#efeff2" stroke-width="1"/>
<line x1="203.44" y1="639.5" x2="203.44" y2="870" stroke="#efeff2" stroke-width="1"/>
<line x1="220.37" y1="639.5" x2="220.37" y2="870" stroke="#efeff2" stroke-width="1"/>
<line x1="237.30" y1="639.5" x2="237.30" y2="870" stroke="#efeff2" stroke-width="1"/>
<line x1="254.23" y1="639.5" x2="254.23" y2="870" stroke="#efeff2" stroke-width="1"/>
<line x1="271.16" y1="639.5" x2="271.16" y2="870" stroke="#efeff2" stroke-width="1"/>
<line x1="288.09" y1="639.5" x2="288.09" y2="870" stroke="#efeff2" stroke-width="1"/>
<line x1="305.02" y1="639.5" x2="305.02" y2="870" stroke="#efeff2" stroke-width="1"/>
<line x1="321.95" y1="639.5" x2="321.95" y2="870" stroke="#efeff2" stroke-width="1"/>
<line x1="338.88" y1="639.5" x2="338.88" y2="870" stroke="#efeff2" stroke-width="1"/>
<line x1="355.81" y1="639.5" x2="355.81" y2="870" stroke="#efeff2" stroke-width="1"/>
<line x1="372.74" y1="639.5" x2="372.74" y2="870" stroke="#efeff2" stroke-width="1"/>
<line x1="389.67" y1="639.5" x2="389.67" y2="870" stroke="#efeff2" stroke-width="1"/>
<line x1="406.60" y1="639.5" x2="406.60" y2="870" stroke="#efeff2" stroke-width="1"/>
<line x1="423.53" y1="639.5" x2="423.53" y2="870" stroke="#efeff2" stroke-width="1"/>
<line x1="440.46" y1="639.5" x2="440.46" y2="870" stroke="#efeff2" stroke-width="1"/>
<line x1="457.39" y1="639.5" x2="457.39" y2="870" stroke="#efeff2" stroke-width="1"/>
<line x1="474.32" y1="639.5" x2="474.32" y2="870" stroke="#efeff2" stroke-width="1"/>
<line x1="491.25" y1="639.5" x2="491.25" y2="870" stroke="#efeff2" stroke-width="1"/>
<line x1="508.18" y1="639.5" x2="508.18" y2="870" stroke="#efeff2" stroke-width="1"/>
<line x1="525.11" y1="639.5" x2="525.11" y2="870" stroke="#efeff2" stroke-width="1"/>
<line x1="542.04" y1="639.5" x2="542.04" y2="870" stroke="#efeff2" stroke-width="1"/>
<line x1="558.97" y1="639.5" x2="558.97" y2="870" stroke="#efeff2" stroke-width="1"/>
<line x1="575.90" y1="639.5" x2="575.90" y2="870" stroke="#efeff2" stroke-width="1"/>
<line x1="592.83" y1="639.5" x2="592.83" y2="870" stroke="#efeff2" stroke-width="1"/>
<line x1="68" y1="662" x2="592" y2="662" stroke="#f1f2f5" stroke-width="1" stroke-dasharray="4 4"/>
<line x1="68" y1="735.5" x2="592" y2="735.5" stroke="#f1f2f5" stroke-width="1" stroke-dasharray="4 4"/>
<line x1="68" y1="809" x2="592" y2="809" stroke="#f1f2f5" stroke-width="1" stroke-dasharray="4 4"/>
<rect x="68.50" y="798.3" width="15.93" height="101.7" fill="#54b399"/>
<rect x="85.43" y="798.3" width="15.93" height="101.7" fill="#54b399"/>
<rect x="119.29" y="771.8" width="15.93" height="128.2" fill="#54b399"/>
<rect x="136.22" y="851.0" width="15.93" height="49.0" fill="#54b399"/>
<rect x="153.15" y="771.8" width="15.93" height="128.2" fill="#54b399"/>
<rect x="170.08" y="771.8" width="15.93" height="128.2" fill="#54b399"/>
<rect x="187.01" y="824.8" width="15.93" height="75.2" fill="#54b399"/>
<rect x="203.94" y="719.0" width="15.93" height="181.0" fill="#54b399"/>
<rect x="220.87" y="771.8" width="15.93" height="128.2" fill="#54b399"/>
<rect x="237.80" y="798.3" width="15.93" height="101.7" fill="#54b399"/>
<rect x="254.73" y="639.6" width="15.93" height="260.4" fill="#54b399"/>
<rect x="271.66" y="771.8" width="15.93" height="128.2" fill="#54b399"/>
<rect x="288.59" y="771.8" width="15.93" height="128.2" fill="#54b399"/>
<rect x="305.52" y="745.2" width="15.93" height="154.8" fill="#54b399"/>
<rect x="322.45" y="771.8" width="15.93" height="128.2" fill="#54b399"/>
<rect x="339.38" y="692.6" width="15.93" height="207.4" fill="#54b399"/>
<rect x="356.31" y="719.0" width="15.93" height="181.0" fill="#54b399"/>
<rect x="373.24" y="851.0" width="15.93" height="49.0" fill="#54b399"/>
<rect x="390.17" y="824.8" width="15.93" height="75.2" fill="#54b399"/>
    <g font-size="10" fill="#646b7a" text-anchor="end"><text transform="translate(57.8 665.3)">8.0%</text><text transform="translate(57.8 738.9)">6.0%</text><text transform="translate(57.8 812.5)">4.0%</text></g>
  </g>
</svg>

<svg width="1269" height="862" viewBox="0 0 1269 862" fill="none" stroke-linecap="round" stroke-linejoin="round">
  <!-- save icon + chevron -->
  <g stroke="#0b72c4" stroke-width="1.1">
    <path d="M19.8,17.6 H28.6 L31.7,20.7 V29.2 Q31.7,30.4 30.5,30.4 H20 Q18.8,30.4 18.8,29.2 V18.8 Q18.8,17.6 19.8,17.6 Z"/>
    <path d="M22.4,17.6 V21.4 H27.8 V17.6"/>
    <circle cx="25.1" cy="26.2" r="1.7"/>
    <path d="M39.6,21.5 L45.2,26.6 L50.8,21.5" stroke-width="1.5"/>
  </g>
  <!-- calendar + chevron -->
  <g stroke="#0b72c4" stroke-width="1.1">
    <rect x="668.5" y="17.3" width="13" height="13.2" rx="1.6"/>
    <path d="M668.5,21.2 H681.5 M671.9,15.6 V18.6 M678.1,15.6 V18.6"/>
    <path d="M671.2,23.6 H672.6 M674.3,23.6 H675.7 M677.4,23.6 H678.8 M671.2,25.8 H672.6 M674.3,25.8 H675.7 M677.4,25.8 H678.8 M671.2,28 H672.6 M674.3,28 H675.7 M677.4,28 H678.8" stroke-width="1.3" stroke-linecap="butt"/>
    <path d="M690,21 L695,25.8 L700,21" stroke-width="1.4"/>
  </g>
  <!-- refresh icon -->
  <g stroke="#0a64a8" stroke-width="1.2">
    <path d="M1171.6,19.2 A6,6 0 1 0 1172.8,23.2"/>
    <path d="M1172.2,16.2 V20 H1168.4"/>
  </g>
  <!-- filter icon -->
  <g stroke="#0b72c4" stroke-width="1.1">
    <circle cx="19.9" cy="63" r="7.4"/>
    <path d="M15.6,60.4 H24.2 M17.4,63.6 H22.4 M19.2,66.8 H20.6"/>
  </g>
  <!-- badge x -->
  <path d="M132.2,61.5 L139,68.3 M139,61.5 L132.2,68.3" stroke="#343741" stroke-width="1.1"/>
  <!-- lens icon -->
  <g stroke="#fff" stroke-width="1.1">
    <path d="M27.53,120.31 A7.3,7.3 0 1 1 21.53,128.14 M21.94,125 A7.3,7.3 0 0 1 25.15,121.18"/>
    <path d="M23.4,132.6 L20.5,135.4"/>
    <path d="M25.5,126 V128.3 M28.4,124.4 V126.5 M30.7,123.1 V126.7 M25.2,130.9 L27.3,129.1 L29.3,130.6 L32.8,127.6"/>
  </g>
  <!-- text icon -->
  <g stroke="#343741" stroke-width="1.2" stroke-linecap="butt">
    <path d="M205.6,123 V120.6 H208 M211.4,120.6 H214.8 M218.2,120.6 H220.6 V123 M220.6,126.4 V129.6 M220.6,133 V135.4 H218.2 M214.8,135.4 H211.4 M208,135.4 H205.6 V133 M205.6,129.6 V126.4"/>
    <path d="M209.2,126 V124.6 H217 V126 M213.1,124.6 V131.6 M210.6,131.7 H215.6" stroke-width="1.1"/>
  </g>
  <!-- map marker icon -->
  <g stroke="#343741" stroke-width="1.1">
    <path d="M246.1,130.4 C243.6,127.8 241.8,126.2 241.8,124.2 A4.3,4.3 0 0 1 250.4,124.2 C250.4,126.2 248.6,127.8 246.1,130.4 Z"/>
    <circle cx="246.1" cy="124.4" r="1.2"/>
    <path d="M241.8,129 L239.2,130.4 L246.1,133.6 L253,130.4 L250.4,129"/>
    <path d="M239.2,132.8 L246.1,136 L253,132.8"/>
  </g>
  <!-- select type chevron -->
  <path d="M366.8,125.6 L372.4,130.8 L378,125.6" stroke="#343741" stroke-width="1.3"/>
  <!-- folder open -->
  <g stroke="#343741" stroke-width="1.1">
    <path d="M410.4,133.4 V122 H415.6 L417,123.8 H423.2 V126"/>
    <path d="M410.4,133.4 L412.6,126 H425.4 L423.2,133.4 Z"/>
  </g>
  <!-- gears -->
  <g stroke="#343741" stroke-width="1.15" transform="translate(615.1 185.2) scale(.96) translate(-615.1 -185.1)">
    <path d="M613.7,177.1 H616.5 L617.3,179.5 L618.9,180.4 L621.4,179.9 L622.8,182.3 L621.1,184.2 V186 L622.8,187.9 L621.4,190.3 L618.9,189.8 L617.3,190.7 L616.5,193.1 H613.7 L612.9,190.7 L611.3,189.8 L608.8,190.3 L607.4,187.9 L609.1,186 V184.2 L607.4,182.3 L608.8,179.9 L611.3,180.4 L612.9,179.5 Z"/>
    <circle cx="615.1" cy="185.1" r="2.7"/>
  </g>
  <g stroke="#343741" stroke-width="1.15" transform="translate(1242.8 185.2) scale(.96) translate(-615.1 -185.1)">
    <path d="M613.7,177.1 H616.5 L617.3,179.5 L618.9,180.4 L621.4,179.9 L622.8,182.3 L621.1,184.2 V186 L622.8,187.9 L621.4,190.3 L618.9,189.8 L617.3,190.7 L616.5,193.1 H613.7 L612.9,190.7 L611.3,189.8 L608.8,190.3 L607.4,187.9 L609.1,186 V184.2 L607.4,182.3 L608.8,179.9 L611.3,180.4 L612.9,179.5 Z"/>
    <circle cx="615.1" cy="185.1" r="2.7"/>
  </g>
  <g stroke="#343741" stroke-width="1.15" transform="translate(615.1 605) scale(.96) translate(-615.1 -185.1)">
    <path d="M613.7,177.1 H616.5 L617.3,179.5 L618.9,180.4 L621.4,179.9 L622.8,182.3 L621.1,184.2 V186 L622.8,187.9 L621.4,190.3 L618.9,189.8 L617.3,190.7 L616.5,193.1 H613.7 L612.9,190.7 L611.3,189.8 L608.8,190.3 L607.4,187.9 L609.1,186 V184.2 L607.4,182.3 L608.8,179.9 L611.3,180.4 L612.9,179.5 Z"/>
    <circle cx="615.1" cy="185.1" r="2.7"/>
  </g>
  <!-- folder-check icons -->
  <g transform="translate(0,0)">
    <path d="M1218,190.4 H1211.6 V178.6 H1217.2 L1218.2,180.6 H1224.4 V184.6" stroke="#343741" stroke-width="1.2"/>
    <circle cx="1222.8" cy="189" r="4" fill="#2b2e3a" stroke="none"/>
    <path d="M1220.9,189.1 L1222.3,190.5 L1224.8,187.7" stroke="#fff" stroke-width="1.1"/>
  </g>
  <g transform="translate(-627.6,420)">
    <path d="M1218,190.4 H1211.6 V178.6 H1217.2 L1218.2,180.6 H1224.4 V184.6" stroke="#343741" stroke-width="1.2"/>
    <circle cx="1222.8" cy="189" r="4" fill="#2b2e3a" stroke="none"/>
    <path d="M1220.9,189.1 L1222.3,190.5 L1224.8,187.7" stroke="#fff" stroke-width="1.1"/>
  </g>
  <!-- map controls -->
  <circle cx="37.2" cy="224.9" r="7.5" fill="#2b2e3a" stroke="none"/>
  <path d="M33.4,224.9 H41 M37.2,221.1 V228.7" stroke="#fff" stroke-width="1.2"/>
  <circle cx="37.2" cy="256.8" r="7.5" fill="#2b2e3a" stroke="none"/>
  <path d="M33.4,256.8 H41" stroke="#fff" stroke-width="1.4"/>
  <g stroke="#343741" stroke-width="1.1">
    <circle cx="37.3" cy="296.9" r="5.6" stroke-dasharray="5.4 3.4" stroke-dashoffset="-1.7" stroke-linecap="butt"/>
    <path d="M37.3,289.4 V292.6 M37.3,301.2 V304.4 M29.8,296.9 H33 M41.6,296.9 H44.8"/>
    <circle cx="37.3" cy="296.9" r="0.7" fill="#343741"/>
  </g>
  <g stroke="#343741" stroke-width="1.1">
    <path d="M30.8,343 L43.8,331 M39.4,330.8 H44 V335.4 M30.6,338.8 V343.4 H35.2"/>
  </g>
  <g>
    <path d="M33.9,374 L41.5,381" stroke="#343741" stroke-width="5.3" stroke-linecap="round"/>
    <path d="M33.9,374 L41.5,381" stroke="#fff" stroke-width="3.1" stroke-linecap="round"/>
    <circle cx="33.9" cy="374" r="4.8" fill="#fff" stroke="#343741" stroke-width="1.1"/>
    <path d="M35.4,375.4 L39,378.7" stroke="#fff" stroke-width="3.1" stroke-linecap="butt"/>
    <path d="M35.293,372.855 L33.446,367.779 L30.25,368.941 L32.097,374.017 Z" fill="#fff" stroke="none"/>
    <path d="M33.962,369.198 L35.293,372.855 L32.097,374.017 L30.766,370.36" stroke="#343741" stroke-width="1.1" fill="none"/>
    <circle cx="41.3" cy="380.9" r="0.6" fill="#343741" stroke="none"/>
  </g>
  <!-- layers collapse icon -->
  <g stroke="#343741" stroke-width="1.1">
    <path d="M592.4,220.6 H599.6 M592.4,224.3 H605.6 M592.4,228 H599.6 M602.6,220.9 L606,224.3 L602.6,227.7"/>
  </g>
  <!-- layer row small icons -->
  <g stroke="#7b8399" stroke-width="0.9">
    <circle cx="481.4" cy="262.3" r="5.5"/><path d="M478.2,260.4 H484.6 M479.6,262.8 H483.2 M480.8,265 H482"/>
    <circle cx="493.1" cy="262" r="4.7"/><path d="M493.1,259.4 V262.2 H495.4"/>
    <rect x="501.6" y="258.4" width="8" height="8" rx="1"/>
    <circle cx="506.9" cy="344.2" r="5.5"/><path d="M503.7,342.3 H510.1 M505.1,344.7 H508.7 M506.3,346.9 H507.5"/>
    <circle cx="518.6" cy="343.9" r="4.7"/><path d="M518.6,341.3 V344.1 H520.9"/>
  </g>
  <!-- row2 expand icon -->
  <g stroke="#a2a6ae" stroke-width="1">
    <path d="M305,308 L317.4,296.2 M313.2,295.8 H317.8 V300.4 M304.6,303.8 V308.4 H309.2"/>
  </g>
  <!-- grid icon -->
  <g stroke="#343741" stroke-width="1">
    <rect x="304.7" y="377.5" width="3.2" height="3.2"/><rect x="309.5" y="377.5" width="3.2" height="3.2"/><rect x="314.3" y="377.5" width="3.2" height="3.2"/>
    <rect x="304.7" y="382.3" width="3.2" height="3.2"/><rect x="309.5" y="382.3" width="3.2" height="3.2"/><rect x="314.3" y="382.3" width="3.2" height="3.2"/>
    <rect x="304.7" y="387.1" width="3.2" height="3.2"/><rect x="309.5" y="387.1" width="3.2" height="3.2"/><rect x="314.3" y="387.1" width="3.2" height="3.2"/>
  </g>
  <!-- popout icons -->
  <g stroke="#343741" stroke-width="1">
    <g id="po"><path d="M224.6,558.6 H222.4 Q221,558.6 221,560 V565.6 Q221,567 222.4,567 H228 Q229.400,567 229.4,565.600 V563.4 M226.400,558.200 H229.800 V561.600 M229.600,558.400 L225,563"/></g>
    <g transform="translate(124.8,0)"><path d="M224.6,558.6 H222.4 Q221,558.6 221,560 V565.6 Q221,567 222.4,567 H228 Q229.400,567 229.4,565.600 V563.4 M226.400,558.200 H229.800 V561.600 M229.600,558.400 L225,563"/></g>
    <g transform="translate(218,0)"><path d="M224.6,558.6 H222.4 Q221,558.6 221,560 V565.6 Q221,567 222.4,567 H228 Q229.400,567 229.4,565.600 V563.4 M226.400,558.200 H229.800 V561.600 M229.600,558.400 L225,563"/></g>
    <g transform="translate(383.4,0)"><path d="M224.6,558.6 H222.4 Q221,558.6 221,560 V565.6 Q221,567 222.4,567 H228 Q229.400,567 229.4,565.600 V563.4 M226.400,558.200 H229.800 V561.600 M229.600,558.400 L225,563"/></g>
  </g>
  <!-- resize handles -->
  <path d="M1247.400,569.600 V574.400 H1242.600" stroke="#5a6072" stroke-width="1.4" stroke-linecap="butt" stroke-linejoin="miter"/>
  <path d="M620.400,569.600 V574.400 H615.600" stroke="#5a6072" stroke-width="1.4" stroke-linecap="butt" stroke-linejoin="miter"/>
</svg>

<div class="abs rightedge"></div>
<svg width="12" height="12" viewBox="0 0 12 12" style="left:0;top:850px"><path d="M0,1.5 A10.5,10.5 0 0 0 10,12 L0,12 Z" fill="#0a0a0a"/></svg>
<div class="abs rightline"></div>
</body>
</html>
